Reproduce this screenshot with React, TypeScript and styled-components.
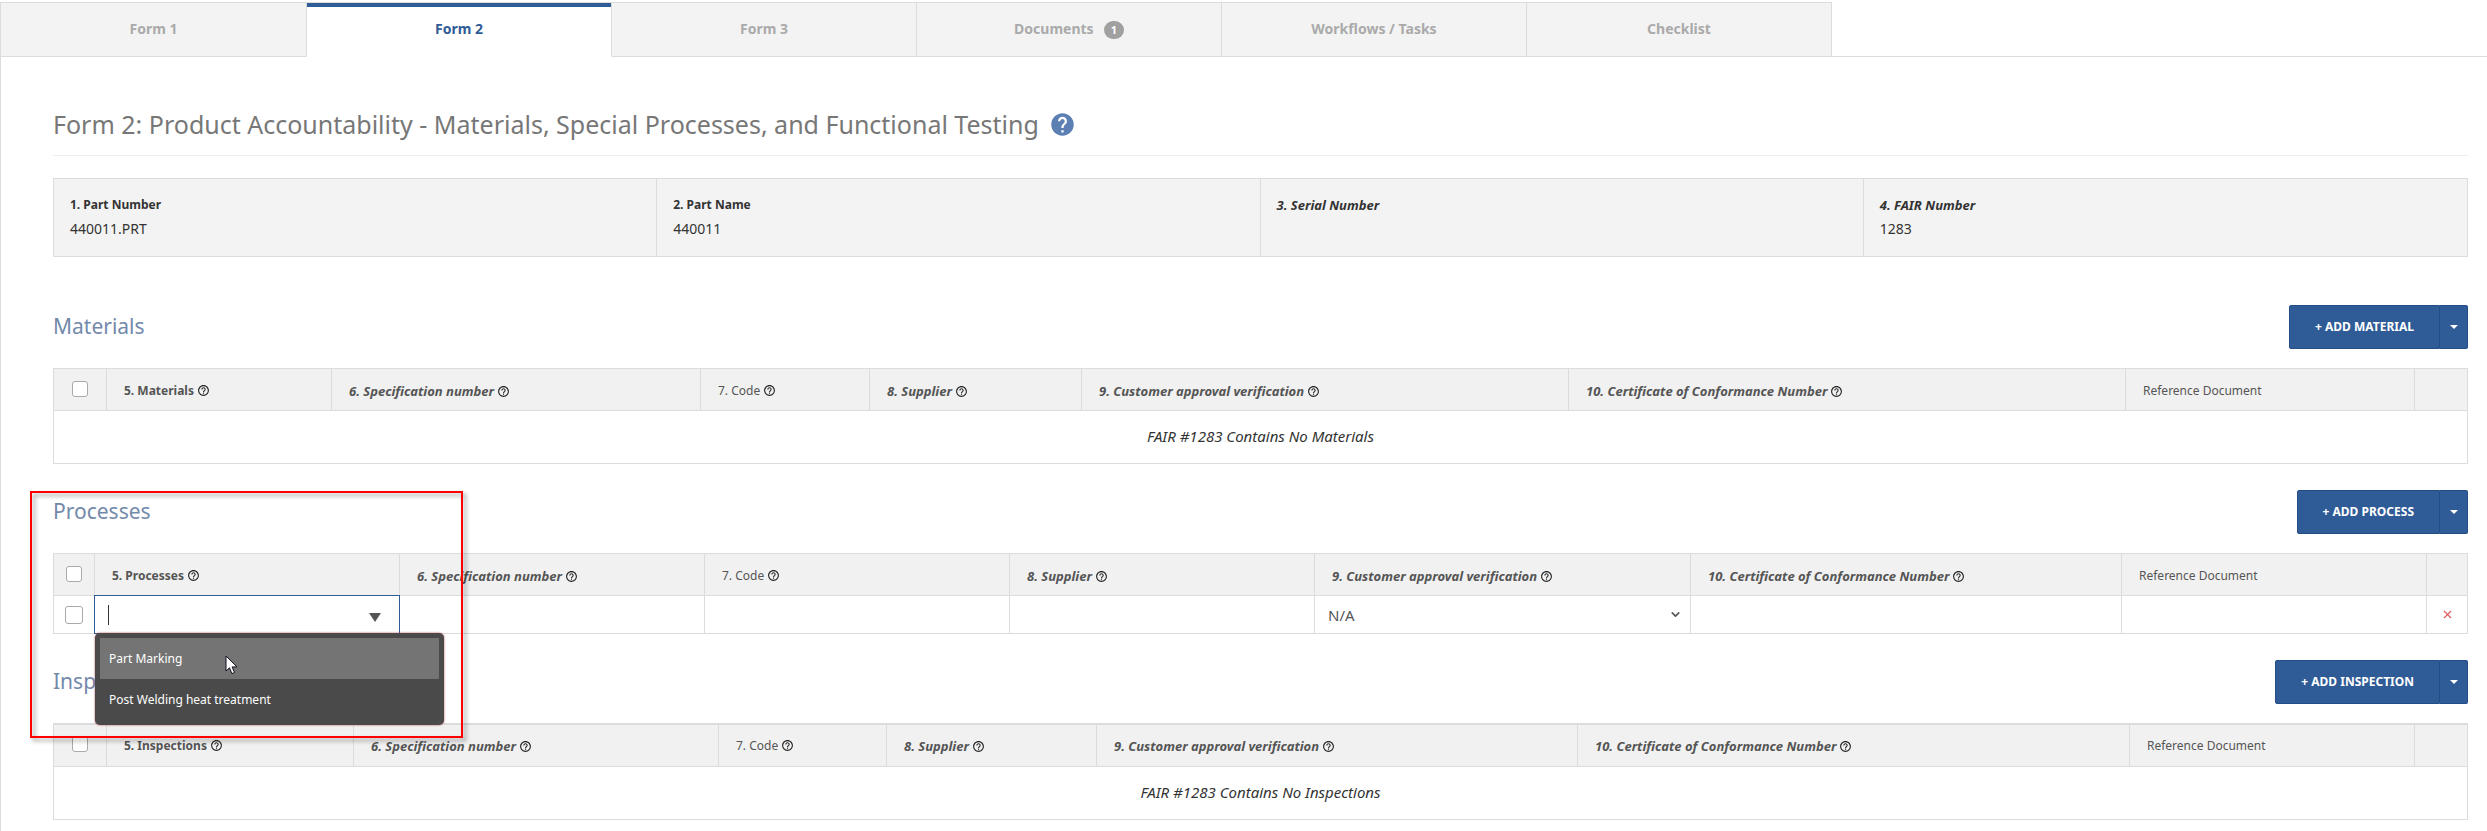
import React, { FC, ReactNode } from 'react';
import styled, { createGlobalStyle } from 'styled-components';
import { FiChevronDown, FiX } from 'react-icons/fi';
import { MdHelp, MdHelpOutline } from 'react-icons/md';

const GlobalStyle = createGlobalStyle`
	* {
		box-sizing: border-box;
	}
	body {
		margin: 0;
		background-color: #fff;
		color: #333;
		font-family: 'Noto Sans', 'Open Sans', sans-serif;
		font-size: 14px;
	}
	button, input, select {
		font-family: inherit;
	}
`;

const TabBar = styled.nav`
	display: flex;
	margin-top: 2px;
	border-left: 1px solid #dcdcdc;
	&::after {
		content: '';
		flex: 1;
		border-bottom: 1px solid #dcdcdc;
	}
`;

const Tab = styled.a<{ $active?: boolean }>`
	display: flex;
	align-items: center;
	justify-content: center;
	flex: 0 1 305px;
	height: 55px;
	padding-bottom: 3px;
	border: 1px solid #dcdcdc;
	border-left: 0;
	border-bottom-color: ${props => props.$active ? '#fff' : '#dcdcdc'};
	background-color: ${props => props.$active ? '#fff' : '#f3f3f3'};
	box-shadow: ${props => props.$active ? 'inset 0 4px #2f5b97' : 'none'};
	color: ${props => props.$active ? '#2f5b97' : '#aaa'};
	font-weight: 700;
	text-decoration: none;
	&:first-child {
		flex-basis: 306px;
	}
`;

const Badge = styled.span`
	margin: 4px 0 0 10px;
	padding: 0 7px;
	border-radius: 9px;
	background-color: #a0a0a0;
	color: #fff;
	font-size: 11px;
	line-height: 18px;
`;

const Page = styled.main`
	padding: 47px 19px 12px 52px;
	border-left: 1px solid #dcdcdc;
`;

const Title = styled.h1`
	display: flex;
	align-items: center;
	gap: 10px;
	margin: 0 0 22px;
	padding-bottom: 11px;
	border-bottom: 1px solid #eee;
	color: #777;
	font-size: 25px;
	font-weight: 400;
	line-height: 40px;
	svg {
		color: #5d80b4;
	}
`;

const InfoGrid = styled.dl`
	display: grid;
	grid-template-columns: repeat(4, 1fr);
	margin: 0 0 48px;
	border: 1px solid #dcdcdc;
	background-color: #f3f3f3;
`;

const InfoCell = styled.div`
	min-height: 77px;
	padding: 14px 16px;
	&:not(:last-child) {
		border-right: 1px solid #dcdcdc;
	}
`;

const InfoLabel = styled.dt<{ $italic?: boolean }>`
	font-size: ${props => props.$italic ? 13 : 12}px;
	font-style: ${props => props.$italic ? 'italic' : 'normal'};
	font-weight: 700;
	line-height: 24px;
`;

const InfoValue = styled.dd`
	margin: 0;
	line-height: 24px;
`;

const Section = styled.section`
	position: relative;
	margin-bottom: 26px;
`;

const SectionHeader = styled.header`
	display: flex;
	justify-content: space-between;
	margin-bottom: 19px;
`;

const SectionTitle = styled.h2`
	margin: 0;
	color: #7389ab;
	font-size: 21px;
	font-weight: 400;
	line-height: 42px;
`;

const SplitButton = styled.div`
	display: flex;
	height: 44px;
`;

const AddButton = styled.button`
	padding: 0 25px 2px;
	border: 1px solid #254d85;
	border-radius: 2px 0 0 2px;
	background-color: #2f5b97;
	color: #fff;
	font-size: 12px;
	font-weight: 700;
	text-transform: uppercase;
`;

const ToggleButton = styled.button`
	display: flex;
	align-items: center;
	justify-content: center;
	width: 28px;
	padding: 0;
	border: 1px solid #254d85;
	border-left: 0;
	border-radius: 0 2px 2px 0;
	background-color: #2f5b97;
	&::after {
		content: '';
		border: 4px solid transparent;
		border-top-color: #fff;
		border-bottom: 0;
	}
`;

const Table = styled.table<{ $heavy?: boolean }>`
	width: 100%;
	border-collapse: collapse;
	border-top: ${props => props.$heavy ? 2 : 1}px solid #dcdcdc;
	table-layout: fixed;
`;

const Col = styled.col<{ $share: number }>`
	width: ${props => props.$share}%;
`;

const HeadCell = styled.th<{ $kind?: 'plain' | 'italic' }>`
	height: 42px;
	padding: 2px 17px 0;
	border: 1px solid #dcdcdc;
	background-color: #f1f1f1;
	color: #555;
	font-size: ${props => props.$kind === 'italic' ? 13 : 12}px;
	font-style: ${props => props.$kind === 'italic' ? 'italic' : 'normal'};
	font-weight: ${props => props.$kind === 'plain' ? 400 : 700};
	line-height: 18px;
	text-align: left;
	white-space: nowrap;
	svg {
		margin-left: 3px;
		color: #222;
		vertical-align: -2px;
	}
`;

const CheckHeadCell = styled(HeadCell)`
	padding: 0 0 2px;
	text-align: center;
`;

const Cell = styled.td`
	height: 38px;
	padding: 0;
	border: 1px solid #dcdcdc;
	text-align: center;
`;

const EmptyCell = styled(Cell)`
	height: 53px;
	padding-bottom: 2px;
	font-size: 15px;
	font-style: italic;
`;

const Checkbox = styled.input<{ $size: number }>`
	appearance: none;
	display: block;
	width: ${props => props.$size}px;
	height: ${props => props.$size}px;
	margin: 0 auto;
	border: 1px solid #aaa;
	border-radius: 3px;
	background-color: #fff;
`;

const ComboCell = styled(Cell)`
	position: relative;
`;

const Combo = styled.div`
	position: absolute;
	inset: -1px;
	display: flex;
	align-items: center;
	border: 1px solid #2f5b97;
	background-color: #fff;
	&::after {
		content: '';
		margin: 5px 18px 0 0;
		border: 6px solid transparent;
		border-top: 9px solid #555;
		border-bottom: 0;
	}
`;

const Caret = styled.span`
	width: 1px;
	height: 20px;
	margin-left: 13px;
	background-color: #333;
`;

const ComboInput = styled.input`
	flex: 1;
	min-width: 0;
	border: 0;
	outline: 0;
	background: transparent;
	font-size: 14px;
`;

const Options = styled.ul`
	position: absolute;
	top: 100%;
	left: 0;
	z-index: 2;
	width: 349px;
	margin: 0;
	padding: 5px;
	border-radius: 5px;
	background-color: #4a4a4a;
	box-shadow: 0 0 2px #b03030;
	list-style: none;
`;

const Option = styled.li<{ $active?: boolean }>`
	padding: 0 9px;
	background-color: ${props => props.$active ? '#747474' : 'transparent'};
	color: #fff;
	font-size: 12px;
	line-height: 41px;
	text-align: left;
`;

const TextInput = styled.input`
	display: block;
	width: 100%;
	height: 36px;
	padding: 0 12px;
	border: 0;
	background: transparent;
`;

const SelectBox = styled.div`
	display: flex;
	align-items: center;
	position: relative;
	svg {
		position: absolute;
		right: 8px;
		color: #555;
		pointer-events: none;
	}
`;

const Select = styled.select`
	appearance: none;
	width: 100%;
	height: 36px;
	padding: 0 13px;
	border: 0;
	background: transparent;
	color: #555;
	font-size: 15px;
`;

const RemoveButton = styled.button`
	display: flex;
	margin: 0 auto;
	padding: 0;
	border: 0;
	background: none;
	color: #e0555a;
`;

const Highlight = styled.div`
	position: absolute;
	top: 1px;
	left: -23px;
	z-index: 3;
	width: 433px;
	height: 247px;
	border: 2px solid #f00;
	filter: drop-shadow(3px 3px 2px rgba(0, 0, 0, 0.4));
	pointer-events: none;
`;

const Pointer = styled.svg`
	position: absolute;
	top: 22px;
	left: 130px;
	z-index: 4;
`;

type Column = { label: string; share: number; kind?: 'plain' | 'italic'; help?: boolean };

// first and last share belong to the tick box and the remove columns
const makeColumns = (name: string, shares: number[]): Column[] => {
	const total = shares.reduce((sum, share) => sum + share, 0);
	const columns: Column[] = [
		{ label: '', share: 0 },
		{ label: `5. ${name}`, share: 0, help: true },
		{ label: '6. Specification number', share: 0, kind: 'italic', help: true },
		{ label: '7. Code', share: 0, kind: 'plain', help: true },
		{ label: '8. Supplier', share: 0, kind: 'italic', help: true },
		{ label: '9. Customer approval verification', share: 0, kind: 'italic', help: true },
		{ label: '10. Certificate of Conformance Number', share: 0, kind: 'italic', help: true },
		{ label: 'Reference Document', share: 0, kind: 'plain' },
		{ label: '', share: 0 },
	];
	return columns.map((column, index) => ({ ...column, share: shares[index] / total * 100 }));
};

const tabs = ['Form 1', 'Form 2', 'Form 3', 'Documents', 'Workflows / Tasks', 'Checklist'];

const info = [
	{ label: '1. Part Number', value: '440011.PRT' },
	{ label: '2. Part Name', value: '440011' },
	{ label: '3. Serial Number', value: '', italic: true },
	{ label: '4. FAIR Number', value: '1283', italic: true },
];

interface FormSectionProps {
	name: string;
	action: string;
	shares: number[];
	children: ReactNode;
	overlay?: ReactNode;
	heavy?: boolean;
}

const FormSection: FC<FormSectionProps> = ({ name, action, shares, children, overlay, heavy }) => {
	const columns = makeColumns(name, shares);
	return <Section>
		<SectionHeader>
			<SectionTitle>{name}</SectionTitle>
			<SplitButton>
				<AddButton type='button'>+ {action}</AddButton>
				<ToggleButton type='button' aria-label={`More ${name} actions`} />
			</SplitButton>
		</SectionHeader>
		<Table $heavy={heavy}>
			<colgroup>
				{columns.map((column, index) => <Col key={index} $share={column.share} />)}
			</colgroup>
			<thead>
				<tr>
					{columns.map((column, index) => index === 0
						? <CheckHeadCell key={index}><Checkbox type='checkbox' $size={16} aria-label={`Select all ${name}`} /></CheckHeadCell>
						: <HeadCell key={index} $kind={column.kind}>
							{column.label}
							{column.help && <MdHelpOutline size={13} />}
						</HeadCell>)}
				</tr>
			</thead>
			<tbody>{children}</tbody>
		</Table>
		{overlay}
	</Section>;
};

const ProcessRow: FC = () => {
	return <tr>
		<Cell><Checkbox type='checkbox' $size={18} aria-label='Select process' /></Cell>
		<ComboCell>
			<Combo>
				<Caret />
				<ComboInput type='text' role='combobox' aria-label='Process' aria-expanded='true' aria-controls='process-options' />
				<Options id='process-options' role='listbox'>
					<Option role='option' aria-selected='true' $active>Part Marking</Option>
					<Option role='option' aria-selected='false'>Post Welding heat treatment</Option>
					<Pointer width='13' height='20' viewBox='0 0 13 20'>
						<path d='M1 1v15l3.5-3.2 2.4 5.8 2.6-1.1-2.4-5.6H12z' fill='#fff' stroke='#112' strokeWidth='1' />
					</Pointer>
				</Options>
			</Combo>
		</ComboCell>
		<Cell><TextInput type='text' aria-label='Specification number' /></Cell>
		<Cell><TextInput type='text' aria-label='Code' /></Cell>
		<Cell><TextInput type='text' aria-label='Supplier' /></Cell>
		<Cell>
			<SelectBox>
				<Select aria-label='Customer approval verification'><option>N/A</option></Select>
				<FiChevronDown size={13} strokeWidth={3} />
			</SelectBox>
		</Cell>
		<Cell><TextInput type='text' aria-label='Certificate of Conformance Number' /></Cell>
		<Cell><TextInput type='text' aria-label='Reference Document' /></Cell>
		<Cell><RemoveButton type='button' aria-label='Remove process'><FiX size={13} /></RemoveButton></Cell>
	</tr>;
};

const App: FC = () => {
	return <>
		<GlobalStyle />
		<TabBar>
			{tabs.map(tab => <Tab key={tab} href='#' $active={tab === 'Form 2'}>
				{tab}
				{tab === 'Documents' && <Badge>1</Badge>}
			</Tab>)}
		</TabBar>
		<Page>
			<Title>
				Form 2: Product Accountability - Materials, Special Processes, and Functional Testing
				<MdHelp size={27} />
			</Title>
			<InfoGrid>
				{info.map(({ label, value, italic }) => <InfoCell key={label}>
					<InfoLabel $italic={italic}>{label}</InfoLabel>
					<InfoValue>{value}</InfoValue>
				</InfoCell>)}
			</InfoGrid>
			<FormSection name='Materials' action='Add Material' shares={[53, 225, 369, 169, 212, 487, 557, 289, 53]}>
				<tr><EmptyCell colSpan={9}>FAIR #1283 Contains No Materials</EmptyCell></tr>
			</FormSection>
			<FormSection name='Processes' action='Add Process' shares={[41, 305, 305, 305, 305, 376, 431, 305, 41]} overlay={<Highlight />}>
				<ProcessRow />
			</FormSection>
			<FormSection name='Inspections' action='Add Inspection' shares={[53, 247, 365, 168, 210, 481, 552, 285, 53]} heavy>
				<tr><EmptyCell colSpan={9}>FAIR #1283 Contains No Inspections</EmptyCell></tr>
			</FormSection>
		</Page>
	</>;
};

export default App;
